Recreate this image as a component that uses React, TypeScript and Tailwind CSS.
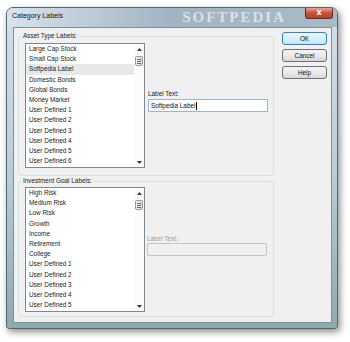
import React from "react";

const assetItems = [
  "Large Cap Stock",
  "Small Cap Stock",
  "Softpedia Label",
  "Domestic Bonds",
  "Global Bonds",
  "Money Market",
  "User Defined 1",
  "User Defined 2",
  "User Defined 3",
  "User Defined 4",
  "User Defined 5",
  "User Defined 6",
];

const goalItems = [
  "High Risk",
  "Medium Risk",
  "Low Risk",
  "Growth",
  "Income",
  "Retirement",
  "College",
  "User Defined 1",
  "User Defined 2",
  "User Defined 3",
  "User Defined 4",
  "User Defined 5",
];

const font = { fontFamily: '"Liberation Sans", Arial, sans-serif' };

function Scrollbar() {
  return (
    <div className="w-[10px] flex flex-col bg-[#fbfbfb]">
      <div className="h-[10px] flex items-center justify-center">
        <svg width="5" height="3" viewBox="0 0 5 3">
          <path d="M0 3 L2.5 0 L5 3 Z" fill="#3a3a3a" />
        </svg>
      </div>
      <div className="flex-1 flex flex-col pt-[2px] pl-[1px] pr-[1px]">
        <div className="h-[10px] rounded-[2px] border border-[#9a9a9a] bg-gradient-to-r from-[#f4f4f4] to-[#dcdcdc] flex flex-col items-center justify-center gap-[1px]">
          <div className="w-[4px] h-px bg-[#6a6a6a]" />
          <div className="w-[4px] h-px bg-[#6a6a6a]" />
          <div className="w-[4px] h-px bg-[#6a6a6a]" />
        </div>
      </div>
      <div className="h-[10px] flex items-center justify-center">
        <svg width="5" height="3" viewBox="0 0 5 3">
          <path d="M0 0 L2.5 3 L5 0 Z" fill="#3a3a3a" />
        </svg>
      </div>
    </div>
  );
}

function ListBox({ items, selected }: { items: string[]; selected?: number }) {
  return (
    <div className="w-[120px] h-[125px] border border-[#828790] bg-white flex shrink-0">
      <div className="flex-1 flex flex-col">
        {items.map((it, i) => (
          <div
            key={i}
            className={
              "h-[10.2px] leading-[10.2px] pl-[3px] text-[6.4px] text-[#222] whitespace-nowrap " +
              (i === selected ? "bg-[#e8e8e8]" : "")
            }
          >
            {it}
          </div>
        ))}
      </div>
      <Scrollbar />
    </div>
  );
}

function Button({ label, primary }: { label: string; primary?: boolean }) {
  return (
    <div
      className={
        "w-[45px] h-[13px] rounded-[3px] border flex items-center justify-center text-[6.4px] text-[#111] " +
        (primary
          ? "border-[#3c7fb1] bg-gradient-to-b from-[#eaf6fd] via-[#d9f0fc] to-[#bee6fd]"
          : "border-[#707070] bg-gradient-to-b from-[#f2f2f2] via-[#ebebeb] to-[#d6d6d6]")
      }
    >
      {label}
    </div>
  );
}

export default function App() {
  return (
    <div className="w-[350px] h-[342px] bg-white pt-[7px] pl-[6px]" style={font}>
      <div className="w-[332px] h-[322px] flex flex-col rounded-t-[7px] rounded-b-[3px] border border-[#4f6a70] bg-gradient-to-b from-[#d3e0ec] via-[#bccdda] to-[#8fa9ad] shadow-[2px_3px_7px_rgba(0,0,0,0.45)] overflow-hidden">
        {/* Title bar */}
        <div className="h-[19px] flex items-start bg-gradient-to-r from-[#d8e3ee] via-[#a3b3c1] to-[#a9bac7]">
          <div className="pl-[5px] pt-[3px] text-[7px] leading-[10px] text-[#111]">Category Labels</div>
          <div
            className="ml-auto pt-[1px] text-[15px] leading-[17px] font-bold tracking-[2px] text-white/60"
            style={{ fontFamily: '"Liberation Serif", serif' }}
          >
            SOFTPEDIA
          </div>
          <div className="ml-[19px] mr-[4px] w-[28px] h-[11px] rounded-b-[3px] border border-t-0 border-[#6e2a22] bg-gradient-to-b from-[#e8a597] via-[#c9503c] to-[#b8402c] flex items-center justify-center">
            <span className="text-[8px] leading-[8px] font-bold text-white" style={{ fontFamily: '"DejaVu Sans", sans-serif' }}>
              x
            </span>
          </div>
        </div>
        {/* Client */}
        <div className="ml-[6px] mr-[5px] h-[296px] border border-[#7d919c] bg-[#f0f0f0] flex pl-[4px] pt-[3px] pr-[4px]">
          <div className="w-[256px] flex flex-col">
            <fieldset className="h-[145px] border border-[#d5dfe5] rounded-[3px] pl-[6px] pt-[2px] flex">
              <legend className="ml-[-3px] px-[1px] text-[6.4px] leading-[10px] text-[#222]">Asset Type Labels:</legend>
              <div className="flex">
                <ListBox items={assetItems} selected={2} />
                <div className="ml-[3px] pt-[46px] flex flex-col">
                  <div className="h-[10px] leading-[10px] text-[6.4px] text-[#222]">Label Text:</div>
                  <div className="w-[120px] h-[13px] border border-[#9fb5cc] bg-white flex items-center pl-[2px] text-[6.4px] text-[#111]">
                    Softpedia Label
                    <div className="ml-[1px] w-px h-[8px] bg-black" />
                  </div>
                </div>
              </div>
            </fieldset>
            <fieldset className="h-[141px] border border-[#d5dfe5] rounded-[3px] pl-[6px] pt-[1px] flex">
              <legend className="ml-[-3px] px-[1px] text-[6.4px] leading-[10px] text-[#222]">Investment Goal Labels:</legend>
              <div className="flex">
                <ListBox items={goalItems} />
                <div className="ml-[2px] pt-[47px] flex flex-col">
                  <div className="h-[9px] leading-[9px] text-[6.4px] text-[#a0a0a0]">Label Text:</div>
                  <div className="w-[120px] h-[13px] border border-[#c4c4c4] rounded-[2px] bg-[#f0f0f0]" />
                </div>
              </div>
            </fieldset>
          </div>
          <div className="ml-[8px] pt-[1px] flex flex-col gap-[4px]">
            <Button label="OK" primary />
            <Button label="Cancel" />
            <Button label="Help" />
          </div>
        </div>
      </div>
    </div>
  );
}
